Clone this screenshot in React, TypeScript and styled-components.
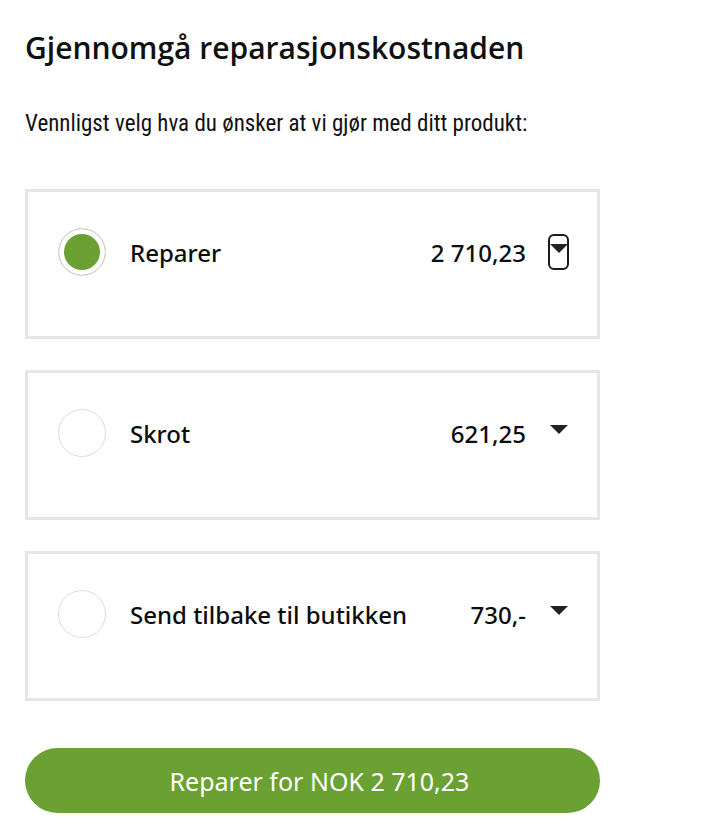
import React, { useState } from 'react'
import styled, { createGlobalStyle } from 'styled-components'

const GlobalStyle = createGlobalStyle`
  body {
    margin: 0;
    background: #ffffff;
    font-family: 'Noto Sans', 'Open Sans', sans-serif;
    color: #111111;
  }
`

interface Option {
  id: string
  label: string
  price: string
}

const options: Option[] = [
  { id: 'repair', label: 'Reparer', price: '2 710,23' },
  { id: 'scrap', label: 'Skrot', price: '621,25' },
  { id: 'return', label: 'Send tilbake til butikken', price: '730,-' },
]

const App: React.FC = () => {
  const [selected, setSelected] = useState('repair')

  return (
    <>
      <GlobalStyle />
      <Page>
        <Heading>Gjennomgå reparasjonskostnaden</Heading>
        <Intro>Vennligst velg hva du ønsker at vi gjør med ditt produkt:</Intro>
        <OptionList>
          {options.map((option) => (
            <OptionCard key={option.id} onClick={() => setSelected(option.id)}>
              <OptionRow>
                <Radio $checked={selected === option.id} />
                <OptionLabel>{option.label}</OptionLabel>
                <OptionPrice>{option.price}</OptionPrice>
                <ExpandButton type='button' $focused={selected === option.id} aria-label='Vis detaljer'>
                  <Caret />
                </ExpandButton>
              </OptionRow>
            </OptionCard>
          ))}
        </OptionList>
        <SubmitButton type='button'>Reparer for NOK 2 710,23</SubmitButton>
      </Page>
    </>
  )
}

const Page = styled.main`
  width: 575px;
  padding: 0 0 20px 25px;
`

const Heading = styled.h1`
  margin: 0;
  padding-top: 28px;
  font-family: 'Open Sans', 'Noto Sans', sans-serif;
  font-size: 30px;
  line-height: 40px;
  font-weight: 600;
  color: #111111;
`

const Intro = styled.p`
  margin: 43px 0 0;
  font-family: 'Roboto Condensed', 'Roboto', sans-serif;
  font-stretch: condensed;
  font-size: 23px;
  line-height: 26px;
  color: #111111;
`

const OptionList = styled.div`
  display: flex;
  flex-direction: column;
  gap: 31px;
  margin-top: 52px;
`

const OptionCard = styled.div`
  box-sizing: border-box;
  height: 150px;
  border: 3px solid #e6e6e8;
  padding: 35px 28px 0 30px;
  cursor: pointer;
`

const OptionRow = styled.div`
  display: flex;
  align-items: center;
  height: 50px;
`

const Radio = styled.span<{ $checked: boolean }>`
  box-sizing: border-box;
  flex: 0 0 48px;
  width: 48px;
  height: 48px;
  border-radius: 50%;
  border: 1px solid #dcdcdc;
  background: ${(p) => (p.$checked ? '#6ba132' : '#ffffff')};
  box-shadow: inset 0 0 0 5px #ffffff;
`

const OptionLabel = styled.span`
  flex: 1;
  margin-left: 24px;
  font-size: 24px;
  font-weight: 500;
  color: #0d0d0d;
`

const OptionPrice = styled.span`
  font-size: 24px;
  font-weight: 500;
  color: #0d0d0d;
`

const ExpandButton = styled.button<{ $focused: boolean }>`
  box-sizing: border-box;
  display: flex;
  justify-content: center;
  align-items: flex-start;
  width: 21px;
  height: 36px;
  margin-left: 22px;
  padding: 8px 0 0;
  background: none;
  border: 2px solid ${(p) => (p.$focused ? '#1a1a1a' : 'transparent')};
  border-radius: 6px;
  cursor: pointer;
`

const Caret = styled.span`
  width: 0;
  height: 0;
  border-left: 9px solid transparent;
  border-right: 9px solid transparent;
  border-top: 9px solid #222222;
`

const SubmitButton = styled.button`
  display: block;
  width: 100%;
  height: 65px;
  margin-top: 47px;
  padding: 0 0 0 14px;
  border: none;
  border-radius: 33px;
  background: #6ba132;
  color: #ffffff;
  font-family: 'Noto Sans', 'Open Sans', sans-serif;
  font-size: 25px;
  font-weight: 400;
  cursor: pointer;
`

export default App
